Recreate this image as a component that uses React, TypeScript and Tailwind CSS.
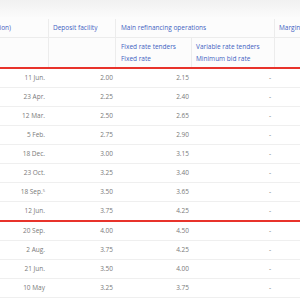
import React from "react";

type Row = { date: string; sup?: string; deposit: string; fixed: string; variable: string };

const ROWS_2019: Row[] = [
  { date: "11 Jun.", deposit: "2.00", fixed: "2.15", variable: "-" },
  { date: "23 Apr.", deposit: "2.25", fixed: "2.40", variable: "-" },
  { date: "12 Mar.", deposit: "2.50", fixed: "2.65", variable: "-" },
  { date: "5 Feb.", deposit: "2.75", fixed: "2.90", variable: "-" },
  { date: "18 Dec.", deposit: "3.00", fixed: "3.15", variable: "-" },
  { date: "23 Oct.", deposit: "3.25", fixed: "3.40", variable: "-" },
  { date: "18 Sep.", sup: "5", deposit: "3.50", fixed: "3.65", variable: "-" },
  { date: "12 Jun.", deposit: "3.75", fixed: "4.25", variable: "-" },
];

const ROWS_2023: Row[] = [
  { date: "20 Sep.", deposit: "4.00", fixed: "4.50", variable: "-" },
  { date: "2 Aug.", deposit: "3.75", fixed: "4.25", variable: "-" },
  { date: "21 Jun.", deposit: "3.50", fixed: "4.00", variable: "-" },
  { date: "10 May", deposit: "3.25", fixed: "3.75", variable: "-" },
  { date: "22 Mar.", deposit: "3.00", fixed: "3.50", variable: "-" },
];

const GRID = "grid grid-cols-[49px_67px_76px_83px_1fr]";

function DataRow({ row, last }: { row: Row; last?: boolean }) {
  return (
    <div
      className={`${GRID} items-center text-[#7a7a7a] ${
        last ? "border-b-2 border-[#e8332b] h-[20px]" : "border-b border-[#efefef] h-[19px]"
      }`}
    >
      <div className="text-right pr-[4px] whitespace-nowrap">
        {row.date}
        {row.sup && <sup className="text-[4px]">{row.sup}</sup>}
      </div>
      <div className="text-right pr-[3px]">{row.deposit}</div>
      <div className="text-right pr-[3px]">{row.fixed}</div>
      <div className="text-right pr-[4px]">{row.variable}</div>
      <div />
    </div>
  );
}

export default function App() {
  return (
    <div className="w-[300px] h-[300px] overflow-hidden bg-white font-['Open_Sans',sans-serif] text-[6.5px] leading-[12px]">
      <div className="h-[17px] bg-gradient-to-b from-[#f1f1f1] to-[#fbfbfb]" />

      {/* Header */}
      <div className={`${GRID} h-[21px] pt-[2px] border-b border-[#ececec] text-[#3f62c2] bg-[#fcfcfc]`}>
        <div className="flex items-center justify-end overflow-hidden whitespace-nowrap pr-[37px] border-r border-[#ececec]">
          Date (in operation)
        </div>
        <div className="flex items-center pl-[4px] border-r border-[#ececec]">Deposit facility</div>
        <div className="col-span-2 flex items-center pl-[5px] border-r border-[#ececec] whitespace-nowrap">
          Main refinancing operations
        </div>
        <div className="flex items-center pl-[4px] whitespace-nowrap overflow-hidden">Marginal lending facility</div>
      </div>
      <div className={`${GRID} h-[29px] text-[#3f62c2] bg-[#fcfcfc]`}>
        <div className="border-r border-[#ececec]" />
        <div className="border-r border-[#ececec]" />
        <div className="flex flex-col justify-center pl-[5px] border-r border-[#ececec] whitespace-nowrap">
          <span>Fixed rate tenders</span>
          <span>Fixed rate</span>
        </div>
        <div className="flex flex-col justify-center pl-[4px] border-r border-[#ececec] whitespace-nowrap">
          <span>Variable rate tenders</span>
          <span>Minimum bid rate</span>
        </div>
        <div />
      </div>
      <div className="h-[2px] bg-[#e8332b]" />

      {/* Rows */}
      {ROWS_2019.map((r, i) => (
        <DataRow key={r.date} row={r} last={i === ROWS_2019.length - 1} />
      ))}
      {ROWS_2023.map((r) => (
        <DataRow key={r.date} row={r} />
      ))}
    </div>
  );
}
